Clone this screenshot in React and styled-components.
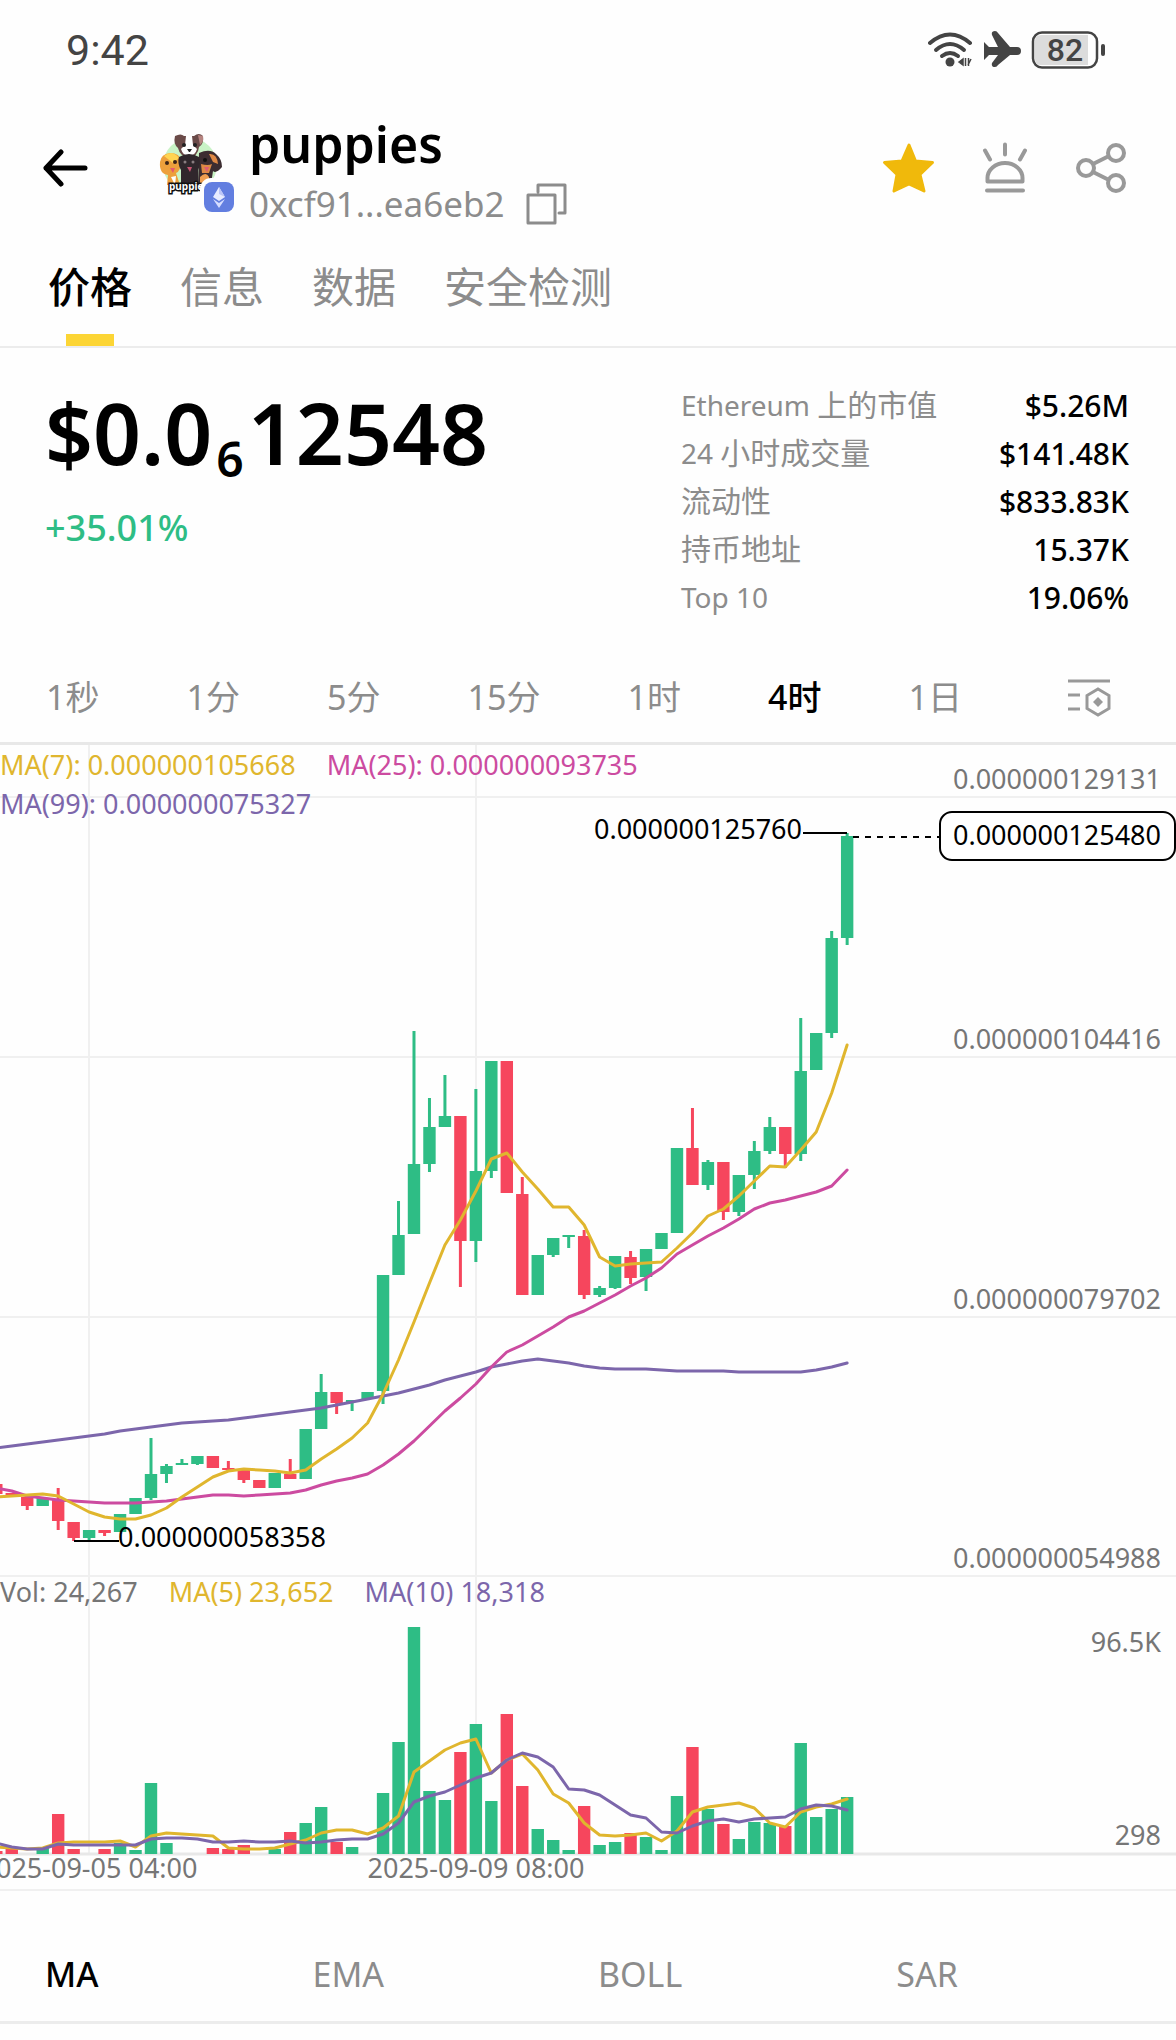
import React, {useState} from 'react'
import styled, {createGlobalStyle} from 'styled-components'

const UP = '#2ebd85'
const DOWN = '#f6465d'
const YELLOW = '#e0b62e'
const PINK = '#cc4ba0'
const PURPLE = '#7c66ab'

const TABS = ['价格', '信息', '数据', '安全检测']

const STATS = [
    {latin: 'Ethereum ', label: '上的市值', value: '$5.26M'},
    {latin: '24 ', label: '小时成交量', value: '$141.48K'},
    {latin: '', label: '流动性', value: '$833.83K'},
    {latin: '', label: '持币地址', value: '15.37K'},
    {latin: 'Top 10', label: '', value: '19.06%'},
]

const INTERVALS = ['1秒', '1分', '5分', '15分', '1时', '4时', '1日']
const INDICATORS = ['MA', 'EMA', 'BOLL', 'SAR']

// [rising, wick top, body top, body bottom, wick bottom, volume top]
const CANDLES = [
    [0, 1483, 1484, 1494, 1494, 1851],
    [0, 1493, 1493, 1495, 1495, 1849],
    [0, 1497, 1497, 1506, 1510, 1854],
    [1, 1498, 1498, 1506, 1506, 1848],
    [0, 1488, 1499, 1521, 1530, 1814],
    [0, 1522, 1522, 1538, 1541, 1849],
    [1, 1530, 1530, 1538, 1541, 1854],
    [0, 1530, 1530, 1533, 1536, 1849],
    [1, 1514, 1514, 1532, 1532, 1843],
    [1, 1498, 1498, 1514, 1514, 1850],
    [1, 1438, 1474, 1498, 1500, 1783],
    [1, 1464, 1466, 1474, 1483, 1843],
    [1, 1459, 1463, 1465, 1465, 1854],
    [1, 1456, 1456, 1464, 1465, 1854],
    [0, 1456, 1456, 1468, 1468, 1848],
    [0, 1461, 1468, 1470, 1470, 1849],
    [0, 1470, 1470, 1480, 1483, 1845],
    [0, 1480, 1480, 1488, 1488, 1854],
    [1, 1473, 1473, 1488, 1488, 1849],
    [0, 1459, 1474, 1479, 1479, 1832],
    [1, 1429, 1429, 1479, 1479, 1823],
    [1, 1374, 1392, 1429, 1429, 1807],
    [0, 1392, 1392, 1403, 1414, 1842],
    [1, 1400, 1400, 1402, 1411, 1847],
    [1, 1392, 1392, 1399, 1399, 1854],
    [1, 1275, 1275, 1391, 1404, 1793],
    [1, 1201, 1235, 1275, 1275, 1742],
    [1, 1031, 1164, 1234, 1234, 1627],
    [1, 1098, 1127, 1164, 1172, 1791],
    [1, 1075, 1116, 1127, 1127, 1800],
    [0, 1116, 1116, 1241, 1287, 1752],
    [1, 1089, 1171, 1241, 1262, 1724],
    [1, 1061, 1061, 1171, 1178, 1801],
    [0, 1061, 1061, 1193, 1193, 1714],
    [0, 1177, 1194, 1295, 1295, 1786],
    [1, 1255, 1255, 1295, 1295, 1829],
    [1, 1238, 1238, 1255, 1257, 1840],
    [1, 1235, 1235, 1237, 1248, 1850],
    [0, 1230, 1236, 1295, 1299, 1806],
    [1, 1286, 1288, 1295, 1297, 1845],
    [1, 1256, 1256, 1288, 1289, 1842],
    [0, 1251, 1257, 1278, 1284, 1833],
    [1, 1249, 1249, 1277, 1291, 1837],
    [1, 1233, 1233, 1249, 1249, 1850],
    [1, 1148, 1148, 1233, 1233, 1796],
    [0, 1108, 1148, 1185, 1185, 1747],
    [1, 1160, 1162, 1185, 1190, 1809],
    [0, 1162, 1162, 1212, 1220, 1824],
    [1, 1175, 1175, 1212, 1216, 1839],
    [1, 1141, 1151, 1175, 1189, 1822],
    [1, 1117, 1127, 1151, 1154, 1823],
    [0, 1127, 1127, 1154, 1168, 1826],
    [1, 1018, 1071, 1154, 1161, 1743],
    [1, 1033, 1033, 1070, 1070, 1817],
    [1, 931, 938, 1033, 1038, 1809],
    [1, 833, 836, 938, 945, 1797],
]

const MA7 = [1497, 1496, 1495, 1494, 1496, 1504, 1512, 1517, 1519, 1519, 1515, 1508, 1497, 1487, 1477, 1471, 1469, 1470, 1471, 1473, 1470, 1459, 1449, 1438, 1423, 1394, 1360, 1322, 1283, 1245, 1220, 1191, 1159, 1153, 1172, 1189, 1207, 1207, 1225, 1257, 1266, 1264, 1263, 1262, 1248, 1233, 1216, 1209, 1196, 1181, 1166, 1167, 1150, 1132, 1093, 1045]
const MA25 = [1488, 1491, 1496, 1498, 1500, 1501, 1502, 1503, 1503, 1503, 1502, 1501, 1499, 1497, 1495, 1495, 1496, 1495, 1494, 1493, 1490, 1485, 1481, 1478, 1474, 1465, 1454, 1441, 1426, 1411, 1398, 1384, 1367, 1352, 1345, 1336, 1327, 1317, 1311, 1303, 1295, 1286, 1278, 1268, 1254, 1245, 1236, 1228, 1219, 1209, 1203, 1200, 1196, 1192, 1186, 1170]
const MA99 = [1448, 1446, 1444, 1442, 1440, 1438, 1436, 1434, 1431, 1429, 1427, 1425, 1423, 1422, 1421, 1420, 1418, 1416, 1414, 1412, 1410, 1408, 1405, 1402, 1399, 1396, 1393, 1389, 1385, 1380, 1376, 1372, 1367, 1364, 1361, 1359, 1361, 1363, 1366, 1368, 1369, 1369, 1369, 1370, 1371, 1371, 1371, 1371, 1372, 1372, 1372, 1372, 1372, 1370, 1367, 1363]
const VOL5 = [1847, 1848, 1849, 1848, 1843, 1842, 1842, 1842, 1841, 1847, 1836, 1833, 1834, 1835, 1836, 1848, 1849, 1849, 1848, 1844, 1840, 1833, 1830, 1830, 1834, 1828, 1816, 1772, 1761, 1750, 1743, 1739, 1773, 1760, 1754, 1770, 1794, 1803, 1823, 1835, 1836, 1835, 1833, 1841, 1831, 1812, 1807, 1805, 1803, 1808, 1823, 1827, 1812, 1807, 1804, 1799]
const VOL10 = [1843, 1847, 1849, 1849, 1844, 1845, 1845, 1845, 1845, 1845, 1839, 1838, 1838, 1839, 1842, 1842, 1841, 1842, 1842, 1841, 1843, 1842, 1840, 1839, 1839, 1834, 1823, 1802, 1796, 1792, 1785, 1778, 1773, 1760, 1753, 1757, 1767, 1789, 1790, 1795, 1805, 1815, 1818, 1832, 1833, 1826, 1821, 1819, 1822, 1819, 1818, 1817, 1809, 1805, 1806, 1810]

const PRICE_GRID = [
    [797, '0.000000129131'],
    [1057, '0.000000104416'],
    [1317, '0.000000079702'],
    [1576, '0.000000054988'],
]

const xAt = i => -3.7 + i * 15.47
const toPoints = values => values.map((y, i) => `${xAt(i).toFixed(1)},${y}`).join(' ')

function MaLine({values, color}) {
    return <polyline points={toPoints(values)} fill="none" stroke={color} strokeWidth="3" strokeLinejoin="round" strokeLinecap="round" />
}

function PriceChart() {
    return (
        <Plot viewBox="0 745 1176 832" role="img" aria-label="K线图">
            <g stroke="#f0f0f0" strokeWidth="2">
                <path d="M89 745V1577M476 745V1577" />
                {PRICE_GRID.map(([y]) => <path key={y} d={`M0 ${y}H1176`} />)}
            </g>
            {PRICE_GRID.map(([y, text]) => <AxisText key={y} x="1161" y={y - 8} textAnchor="end">{text}</AxisText>)}
            {CANDLES.map(([up, high, top, bottom, low], i) => (
                <g key={i} fill={up ? UP : DOWN}>
                    <rect x={xAt(i) - 1.5} y={high} width="3" height={low - high} />
                    <rect x={xAt(i) - 6.2} y={top} width="12.4" height={bottom - top} />
                </g>
            ))}
            <MaLine values={MA99} color={PURPLE} />
            <MaLine values={MA25} color={PINK} />
            <MaLine values={MA7} color={YELLOW} />
            <g stroke="#000" strokeWidth="2" fill="none">
                <path d="M803 833H847M74 1541H119" />
                <path d="M853 837H939" strokeDasharray="6 6" />
                <rect x="940" y="812" width="235" height="48" rx="12" fill="#fff" />
            </g>
            <AxisText x="802" y="839" textAnchor="end" $strong>0.000000125760</AxisText>
            <AxisText x="1161" y="845" textAnchor="end" $strong>0.000000125480</AxisText>
            <AxisText x="118" y="1547" $strong>0.000000058358</AxisText>
        </Plot>
    )
}

function VolumeChart() {
    return (
        <Plot viewBox="0 1577 1176 314" role="img" aria-label="成交量">
            <path d="M89 1577V1854M476 1577V1854" stroke="#f0f0f0" strokeWidth="2" />
            <path d="M0 1854H1176" stroke="#e8e8e8" strokeWidth="3" />
            <path d="M0 1890H1176" stroke="#f0f0f0" strokeWidth="2" />
            {CANDLES.map(([up, , , , , top], i) => (
                <rect key={i} x={xAt(i) - 6.2} y={top} width="12.4" height={1854 - top} fill={up ? UP : DOWN} />
            ))}
            <MaLine values={VOL5} color={YELLOW} />
            <MaLine values={VOL10} color={PURPLE} />
            <AxisText x="1161" y="1652" textAnchor="end">96.5K</AxisText>
            <AxisText x="1161" y="1845" textAnchor="end">298</AxisText>
            <AxisText x="89" y="1878" textAnchor="middle">2025-09-05 04:00</AxisText>
            <AxisText x="476" y="1878" textAnchor="middle">2025-09-09 08:00</AxisText>
        </Plot>
    )
}

function StatusIcons() {
    return (
        <svg width="178" height="38" viewBox="0 0 178 38" fill="none" aria-hidden="true">
            <g stroke="#444" strokeWidth="4" strokeLinecap="round">
                <path d="M2 12Q22 -5 42 12" />
                <path d="M8 19Q22 7 36 19" />
                <path d="M14 25Q22 19 30 25" />
            </g>
            <circle cx="22" cy="31" r="4.5" fill="#444" />
            <path d="M31 31l4-3v6zM37.5 27v8M40.5 27v8M43 28l-3 6" fill="#444" stroke="#444" strokeWidth="1.5" />
            <path d="M56 11l5 5h9L64 4q-1-4 3-4 2 0 3 2l12 14h7q4 0 4 4t-4 4h-7L70 34q-1 2-3 2-4 0-3-4l6-8h-9l-5 5z" fill="#444" />
            <rect x="105" y="1.5" width="64" height="35" rx="9" stroke="#444" strokeWidth="2.5" />
            <path d="M113 4h47v30h-47q-6 0-6-6V10q0-6 6-6z" fill="#dcdcdc" />
            <rect x="173" y="13" width="4" height="12" rx="2" fill="#444" />
            <BatteryText x="137" y="30" textAnchor="middle">82</BatteryText>
        </svg>
    )
}

function TokenLogo() {
    return (
        <svg width="78" height="80" viewBox="0 0 78 80" aria-hidden="true">
            <circle cx="32" cy="33" r="27" fill="#c9f3c6" />
            {/* husky */}
            <path d="M17 4q6-3 9 0h10q5-4 9 0 1 8-4 11-1 10-10 10T20 16q-5-4-3-12z" fill="#6a4a48" />
            <path d="M28 4h6l1 9 4 4q-2 7-8 7t-8-7l4-4z" fill="#fff" />
            <path d="M40 3l5 1q1 6-3 9z" fill="#b5837f" />
            <circle cx="26" cy="13" r="2" fill="#222" />
            <circle cx="37" cy="13" r="2" fill="#222" />
            <path d="M29 17h5l-2 3h-1z" fill="#222" />
            {/* golden puppy */}
            <path d="M2 30q1-8 10-9 10 0 11 8 0 10-5 12l4 12H9l1-10Q1 42 2 30z" fill="#eda03c" />
            <path d="M6 24q8-7 15 2l-6 5z" fill="#ffd452" />
            <circle cx="9" cy="31" r="2" fill="#3c2417" />
            <circle cx="17" cy="30" r="2" fill="#3c2417" />
            <path d="M12 36h5l-2 5z" fill="#e45a6d" />
            <path d="M13 45l5-1-1 9z" fill="#fff" />
            {/* black and tan puppy */}
            <path d="M41 21q11-5 17 1 6 5 6 13-6 7-9 4l-2 13H40z" fill="#3c2d31" />
            <path d="M51 22q8-1 9 10l-5-2zM43 32q7 2 11 0l-3 9h-7z" fill="#df8945" />
            <circle cx="47" cy="28" r="2" fill="#111" />
            <path d="M46 35h5l-2 5z" fill="#df5c75" />
            <path d="M42 45q6-6 9 0v8h-9z" fill="#ef9e50" />
            {/* black puppy */}
            <path d="M21 25q10-6 20 0 2 8-1 13v15H23V38q-4-7-2-13z" fill="#30272c" />
            <circle cx="27" cy="30" r="1.5" fill="#897d80" />
            <circle cx="35" cy="30" r="1.5" fill="#897d80" />
            <path d="M29 35h5l-2 5z" fill="#c75370" />
            <LogoText x="11" y="58">puppies</LogoText>
            <rect x="42" y="46" width="38" height="38" rx="11" fill="#fefefe" />
            <rect x="46" y="50" width="30" height="30" rx="8" fill="#627ee0" />
            <path d="M61 55l6 10-6 4-6-4z" fill="#e8ecff" />
            <path d="M61 55l6 10-6-3z" fill="#bcc6f7" />
            <path d="M55 67l6 4 6-4-6 9z" fill="#d6ddff" />
        </svg>
    )
}

export default function App() {
    const [tab, setTab] = useState('价格')
    const [interval, setActiveInterval] = useState('4时')
    const [indicator, setIndicator] = useState('MA')
    return (
        <Page>
            <GlobalStyle />
            <StatusBar>
                <Clock>9:42</Clock>
                <StatusIcons />
            </StatusBar>
            <Header>
                <IconButton $width="46px" aria-label="返回">
                    <svg width="46" height="40" viewBox="0 0 46 40" fill="none" stroke="#000" strokeWidth="5" strokeLinecap="round" strokeLinejoin="round">
                        <path d="M42 20H3M18 4L3 20l15 16" />
                    </svg>
                </IconButton>
                <Token>
                    <TokenLogo />
                    <div>
                        <TokenName>puppies</TokenName>
                        <Address>
                            0xcf91...ea6eb2
                            <IconButton $width="42px" aria-label="复制">
                                <svg width="42" height="42" viewBox="0 0 42 42" fill="none" stroke="#8c8c8c" strokeWidth="3" strokeLinejoin="round" strokeLinecap="round">
                                    <path d="M2 12h27v28H2zM12 9V2h27v28h-6" />
                                </svg>
                            </IconButton>
                        </Address>
                    </div>
                </Token>
                <Actions>
                    <IconButton $width="56px" aria-label="收藏">
                        <svg width="56" height="56" viewBox="0 0 56 56">
                            <path d="M28 5l6.5 16 17 1.5L39 34.5l4 16.5-15-7-15 7 3-16.5-12.5-12L21 21z" fill="#f0b90b" stroke="#f0b90b" strokeWidth="3" strokeLinejoin="round" />
                        </svg>
                    </IconButton>
                    <IconButton $width="56px" aria-label="提醒">
                        <svg width="56" height="56" viewBox="0 0 56 56" fill="none" stroke="#999" strokeWidth="4" strokeLinecap="round" strokeLinejoin="round">
                            <path d="M28 4.5v10M8 10.5l5 9M48 10.5l-5 9M10 50.5h36M10.5 41.5V38a17.5 15 0 0 1 35 0v3.5z" />
                        </svg>
                    </IconButton>
                    <IconButton $width="56px" aria-label="分享">
                        <svg width="56" height="56" viewBox="0 0 56 56" fill="none" stroke="#999" strokeWidth="4">
                            <circle cx="13" cy="28" r="8" />
                            <circle cx="43" cy="13" r="8" />
                            <circle cx="43" cy="43" r="8" />
                            <path d="M20 24l16-8M20 32l16 8" />
                        </svg>
                    </IconButton>
                </Actions>
            </Header>
            <Tabs>
                {TABS.map(name => (
                    <Tab key={name} $active={tab === name} onClick={() => setTab(name)}>{name}</Tab>
                ))}
            </Tabs>
            <Summary>
                <div>
                    <Price>$0.0<sub>6</sub>12548</Price>
                    <Change>+35.01%</Change>
                </div>
                <Stats>
                    {STATS.map(s => (
                        <Stat key={s.value}>
                            <dt>{s.latin}{s.label && <Cjk>{s.label}</Cjk>}</dt>
                            <dd>{s.value}</dd>
                        </Stat>
                    ))}
                </Stats>
            </Summary>
            <Intervals>
                {INTERVALS.map(name => (
                    <Interval key={name} $active={interval === name} onClick={() => setActiveInterval(name)}>{name}</Interval>
                ))}
                <ChartSettings aria-label="图表设置">
                    <svg width="44" height="40" viewBox="0 0 44 40" fill="none" stroke="#999" strokeWidth="3">
                        <path d="M1 4h42M1 18h12M1 32h12M31 12l11 6.5v13L31 38l-11-6.5v-13z" />
                        <path d="M31 20l5 5-5 5-5-5z" fill="#999" stroke="none" />
                    </svg>
                </ChartSettings>
            </Intervals>
            <Pane>
                <Legend $line="39px">
                    <LegendItem $color={YELLOW}>MA(7): 0.000000105668</LegendItem>
                    <LegendItem $color={PINK}>MA(25): 0.000000093735</LegendItem>
                    <LegendItem $color={PURPLE}>MA(99): 0.000000075327</LegendItem>
                </Legend>
                <PriceChart />
            </Pane>
            <Pane>
                <Legend $line="30px">
                    <LegendItem $color="#767676">Vol: 24,267</LegendItem>
                    <LegendItem $color={YELLOW}>MA(5) 23,652</LegendItem>
                    <LegendItem $color={PURPLE}>MA(10) 18,318</LegendItem>
                </Legend>
                <VolumeChart />
            </Pane>
            <Indicators>
                {INDICATORS.map(name => (
                    <Indicator key={name} $active={indicator === name} onClick={() => setIndicator(name)}>{name}</Indicator>
                ))}
            </Indicators>
        </Page>
    )
}

const GlobalStyle = createGlobalStyle`
    body{
        margin: 0;
        background: #fefefe;
    }
    button{
        font-family: inherit;
        background: none;
        border: none;
        padding: 0;
        margin: 0;
        cursor: pointer;
    }
`
const Page = styled.main`
    font-family: 'Noto Sans', 'Noto Sans CJK SC', sans-serif;
    color: #000;
    min-height: 100vh;
    overflow: hidden;
`
const StatusBar = styled.div`
    display: flex;
    align-items: center;
    justify-content: space-between;
    height: 100px;
    padding: 0 70px 0 66px;
`
const Clock = styled.span`
    font-family: Roboto, sans-serif;
    font-size: 43px;
    line-height: 52px;
    color: #444;
`
const BatteryText = styled.text`
    font-family: Roboto, sans-serif;
    font-size: 32px;
    font-weight: 500;
    fill: #444;
`
const LogoText = styled.text`
    font-family: 'Noto Sans', sans-serif;
    font-size: 10px;
    font-weight: 700;
    fill: #fff;
    stroke: #111;
    stroke-width: 3px;
    paint-order: stroke;
`
const Header = styled.header`
    display: flex;
    align-items: center;
    height: 136px;
    padding: 0 47px 0 43px;
`
const IconButton = styled.button`
    display: flex;
    justify-content: center;
    flex: none;
    width: ${props => props.$width};
`
const Token = styled.div`
    display: flex;
    flex: 1;
    align-items: center;
    gap: 13px;
    margin: 8px 0 0 69px;
`
const TokenName = styled.h1`
    margin: 0;
    font-size: 50px;
    font-weight: 600;
    line-height: 64px;
`
const Address = styled.div`
    display: flex;
    align-items: center;
    gap: 21px;
    font-size: 35px;
    line-height: 56px;
    color: #8c8c8c;
`
const Actions = styled.div`
    display: flex;
    gap: 40px;
`
const Tabs = styled.nav`
    display: flex;
    gap: 48px;
    height: 110px;
    padding: 0 48px;
    border-bottom: 2px solid #ececec;
`
const Tab = styled.button`
    display: flex;
    flex-direction: column;
    align-items: center;
    justify-content: space-between;
    font-size: 42px;
    line-height: 60px;
    padding-top: 21px;
    color: ${props => props.$active ? '#000' : '#8c8c8c'};
    font-weight: ${props => props.$active ? 500 : 400};
    &::after{
        content: '';
        width: 48px;
        height: 12px;
        background: ${props => props.$active ? '#fcd535' : 'none'};
    }
`
const Summary = styled.section`
    display: flex;
    justify-content: space-between;
    padding: 33px 47px 30px 45px;
`
const Price = styled.div`
    font-size: 84px;
    font-weight: 600;
    line-height: 104px;
    sub{
        font-size: 48px;
        line-height: 0;
        vertical-align: -12px;
        margin: 0 4px;
    }
`
const Change = styled.div`
    margin-top: 20px;
    font-size: 36px;
    font-weight: 500;
    line-height: 46px;
    color: ${UP};
`
const Stats = styled.dl`
    width: 448px;
    margin: 0;
`
const Stat = styled.div`
    display: flex;
    justify-content: space-between;
    align-items: center;
    height: 48px;
    dt{
        font-size: 28px;
        line-height: 48px;
        color: #8c8c8c;
    }
    dd{
        margin: 0;
        font-size: 30px;
        font-weight: 500;
    }
`
const Cjk = styled.span`
    font-size: 30px;
`
const Intervals = styled.nav`
    display: flex;
    justify-content: space-between;
    align-items: center;
    height: 91px;
    padding: 0 65px 0 46px;
    border-bottom: 3px solid #e8e8e8;
`
const Interval = styled.button`
    font-size: 34px;
    line-height: 48px;
    color: ${props => props.$active ? '#000' : '#8c8c8c'};
    font-weight: ${props => props.$active ? 500 : 400};
`
const ChartSettings = styled.button`
    display: flex;
    margin-left: 18px;
`
const Pane = styled.section`
    position: relative;
`
const Plot = styled.svg`
    display: block;
    width: 100%;
`
const AxisText = styled.text`
    font-size: 27px;
    fill: ${props => props.$strong ? '#000' : '#767676'};
`
const Legend = styled.ul`
    position: absolute;
    top: 0;
    left: 0;
    display: flex;
    flex-wrap: wrap;
    column-gap: 31px;
    width: 60%;
    margin: 0;
    padding: 0;
    list-style: none;
    line-height: ${props => props.$line};
`
const LegendItem = styled.li`
    font-size: 27px;
    color: ${props => props.$color};
`
const Indicators = styled.nav`
    display: flex;
    gap: 214px;
    padding: 60px 45px 24px;
    border-bottom: 3px solid #ececec;
`
const Indicator = styled.button`
    font-size: 34px;
    line-height: 46px;
    color: ${props => props.$active ? '#000' : '#8c8c8c'};
    font-weight: ${props => props.$active ? 500 : 400};
`
